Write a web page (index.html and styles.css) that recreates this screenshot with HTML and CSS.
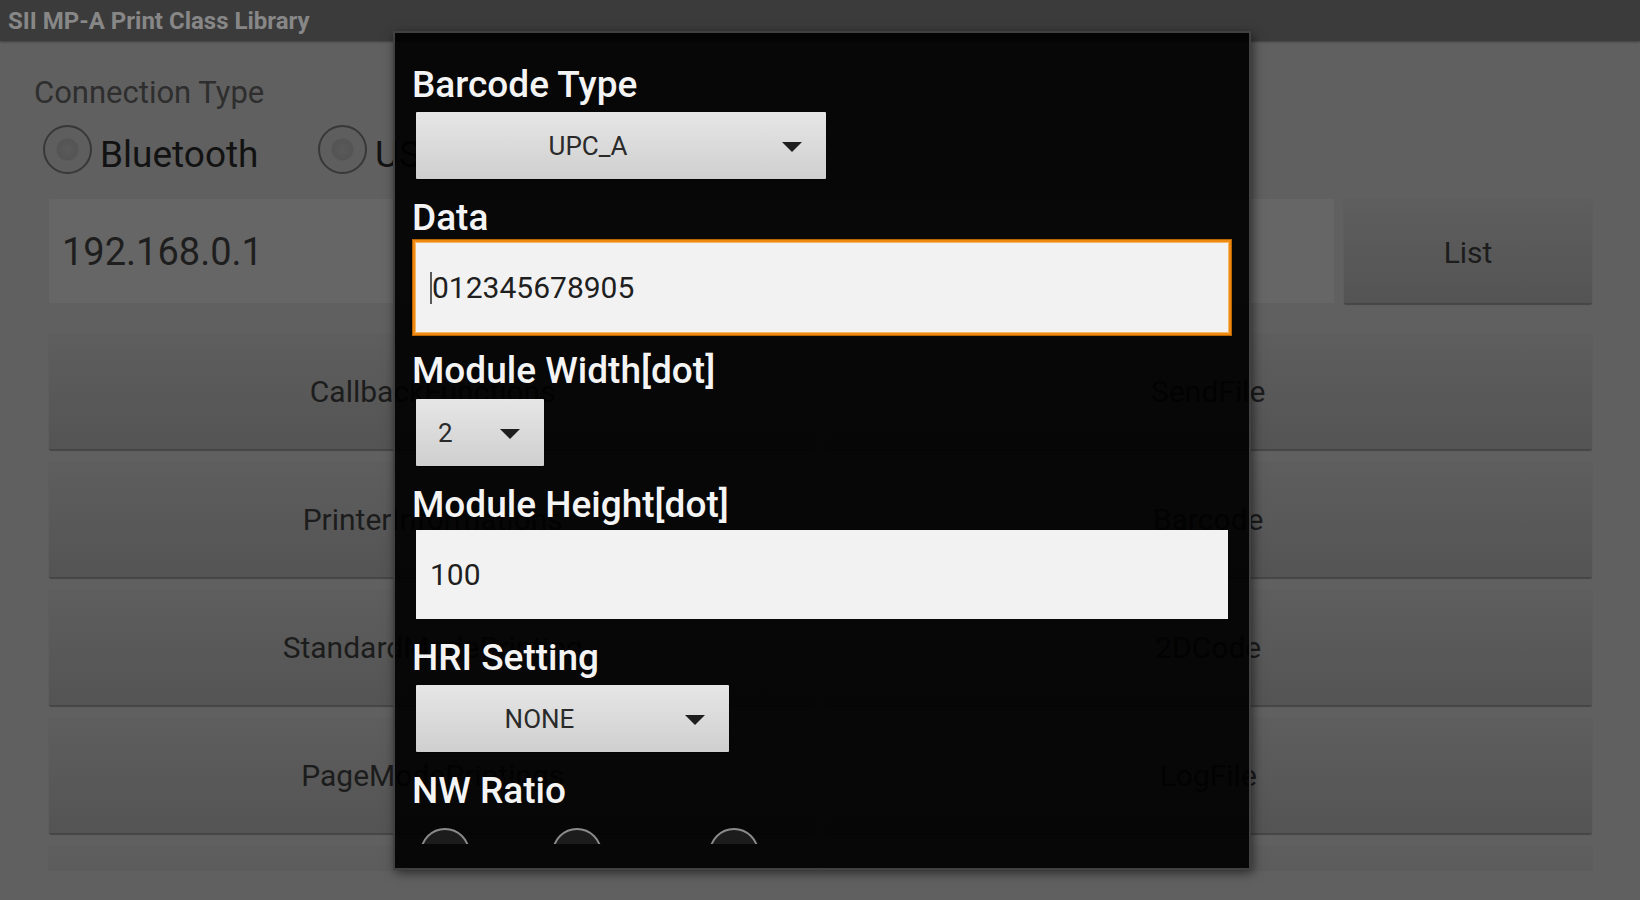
FILE: index.html
```html
<!DOCTYPE html>
<html>
<head>
<meta charset="utf-8">
<title>SII MP-A Print Class Library</title>
<link rel="stylesheet" href="styles.css">
</head>
<body>
<div class="app">
  <header class="titlebar">SII MP-A Print Class Library</header>
  <main class="content">
    <div class="section-label">Connection Type</div>
    <div class="radio-row">
      <div class="radio"><span class="radio-circle"></span><span class="radio-text">Bluetooth</span></div>
      <div class="radio"><span class="radio-circle"></span><span class="radio-text">USB</span></div>
      <div class="radio"><span class="radio-circle"></span><span class="radio-text">LAN</span></div>
    </div>
    <div class="address-row">
      <div class="address-field">192.168.0.1</div>
      <div class="btn list-btn">List</div>
    </div>
    <div class="btn-grid">
      <div class="btn">CallbackFunctions</div>
      <div class="btn">SendFile</div>
      <div class="btn">PrinterInformations</div>
      <div class="btn">Barcode</div>
      <div class="btn">StandardModePrinting</div>
      <div class="btn">2DCode</div>
      <div class="btn">PageModePrintings</div>
      <div class="btn">LogFile</div>
      <div class="btn">Disconnect</div>
      <div class="btn">Close</div>
    </div>
  </main>

  <div class="dialog">
    <div class="dialog-body">
      <div class="field-label">Barcode Type</div>
      <div class="spinner spinner-type"><span class="spinner-text">UPC_A</span><span class="spinner-arrow"></span></div>

      <div class="field-label">Data</div>
      <div class="text-input focused"><span class="caret"></span>012345678905</div>

      <div class="field-label">Module Width[dot]</div>
      <div class="spinner spinner-small"><span class="spinner-text">2</span><span class="spinner-arrow"></span></div>

      <div class="field-label">Module Height[dot]</div>
      <div class="text-input">100</div>

      <div class="field-label">HRI Setting</div>
      <div class="spinner spinner-hri"><span class="spinner-text">NONE</span><span class="spinner-arrow"></span></div>

      <div class="field-label">NW Ratio</div>
      <div class="ratio-row">
        <div class="ratio"><span class="ratio-circle"></span><span class="ratio-text">1:2</span></div>
        <div class="ratio"><span class="ratio-circle"></span><span class="ratio-text">1:2.5</span></div>
        <div class="ratio"><span class="ratio-circle"></span><span class="ratio-text">1:3</span></div>
      </div>
    </div>
  </div>
</div>
</body>
</html>
```
FILE: styles.css
```css
* { box-sizing: border-box; }

html, body {
  margin: 0;
  padding: 0;
}

body {
  width: 1640px;
  height: 900px;
  overflow: hidden;
  background: #606060;
  font-family: Roboto, "Liberation Sans", sans-serif;
}

.app {
  position: relative;
  width: 1640px;
  height: 900px;
  overflow: hidden;
  background: #606060;
}

.titlebar {
  height: 41px;
  background: #3b3b3b;
  color: #878787;
  font-size: 24px;
  font-weight: bold;
  line-height: 43px;
  padding-left: 8px;
  box-shadow: 0 1px 2px rgba(0,0,0,0.35);
}

.content {
  height: 830px;
  overflow: hidden;
  padding: 35px 32px 0 32px;
}

.section-label {
  font-size: 31px;
  line-height: 33px;
  color: #2e2e2e;
  padding-left: 2px;
}

.radio-row {
  display: flex;
  align-items: center;
  height: 80px;
}

.radio {
  width: 275px;
  display: flex;
  align-items: center;
  flex-shrink: 0;
}

.radio:first-child {
  margin-left: 11px;
}

.radio-circle {
  width: 49px;
  height: 49px;
  border-radius: 50%;
  border: 2px solid #383838;
  background: radial-gradient(circle at 50% 50%, #5a5a5a 0, #545454 10px, #5e5e5e 12px, #5e5e5e 100%);
  flex-shrink: 0;
}

.radio-text {
  font-size: 37px;
  color: #121212;
  margin-left: 8px;
  padding-top: 10px;
}

.address-row {
  display: flex;
  gap: 10px;
  margin-top: 10px;
  padding: 0 16px 0 17px;
  height: 104px;
}

.address-field {
  flex: 1;
  background: #666666;
  font-size: 38px;
  color: #1e1e1e;
  display: flex;
  align-items: center;
  padding-left: 13px;
  padding-top: 2px;
}

.btn {
  background: linear-gradient(#5e5e5e, #545454);
  border-radius: 2px;
  box-shadow: 0 2px 1px rgba(0,0,0,0.28);
  font-size: 30px;
  color: #1c1c1c;
  display: flex;
  align-items: center;
  justify-content: center;
  white-space: nowrap;
  overflow: hidden;
}

.list-btn {
  width: 248px;
  flex-shrink: 0;
  padding-top: 2px;
}

.btn-grid {
  display: grid;
  grid-template-columns: 1fr 1fr;
  grid-auto-rows: 116px;
  gap: 12px 8px;
  margin-top: 30px;
  padding: 0 16px 0 17px;
}

/* Dialog overlay */
.dialog {
  position: absolute;
  left: 393px;
  top: 31px;
  width: 858px;
  height: 839px;
  background: rgba(0,0,0,0.92);
  border: 2px solid #414141;
  box-shadow: 2px 3px 10px rgba(0,0,0,0.55);
  padding: 13px 15px 24px 15px;
}

.dialog-body {
  height: 798px;
  overflow: hidden;
}

.field-label {
  font-size: 37px;
  font-weight: 500;
  line-height: 42px;
  padding-top: 18px;
  padding-bottom: 4px;
  padding-left: 2px;
  color: #f4f4f4;
  white-space: nowrap;
}

.spinner {
  height: 67px;
  margin: 2px 6px 0 6px;
  background: linear-gradient(#e6e6e6, #cfcfcf);
  border-radius: 1px;
  box-shadow: 0 1px 1px rgba(0,0,0,0.6);
  display: flex;
  align-items: center;
}

.spinner-type { width: 410px; }
.spinner-small { width: 128px; margin-top: 3px; }
.spinner-hri { width: 313px; }

.spinner-text {
  flex: 1;
  text-align: center;
  font-size: 26px;
  color: #2a2a2a;
  padding-right: 22px;
}

.spinner-small .spinner-text {
  text-align: left;
  padding-left: 22px;
  padding-right: 0;
}

.spinner-arrow {
  width: 0;
  height: 0;
  border-left: 10px solid transparent;
  border-right: 10px solid transparent;
  border-top: 10px solid #1e1e1e;
  margin-right: 24px;
  margin-top: 2px;
}

.text-input {
  height: 89px;
  margin: 0 6px;
  background: #f2f2f2;
  font-size: 30px;
  color: #1f1f1f;
  display: flex;
  align-items: center;
  padding-left: 14px;
}

.text-input.focused {
  box-shadow: 0 0 0 1px #f6b766, 0 0 0 3px #ee8a12, 0 0 0 4px #b86400;
}

.caret {
  display: inline-block;
  width: 2px;
  height: 32px;
  background: #5a5a5a;
}

.ratio-row {
  display: flex;
  gap: 33px;
  margin-top: 12px;
  padding-left: 10px;
}

.ratio {
  display: flex;
  align-items: flex-start;
  gap: 8px;
}

.ratio-circle {
  width: 50px;
  height: 50px;
  border-radius: 50%;
  border: 2px solid #8a8a8a;
  background: #1c1c1c;
  flex-shrink: 0;
}

.ratio-text {
  font-size: 30px;
  line-height: 36px;
  padding-top: 26px;
  color: #f4f4f4;
}
```
